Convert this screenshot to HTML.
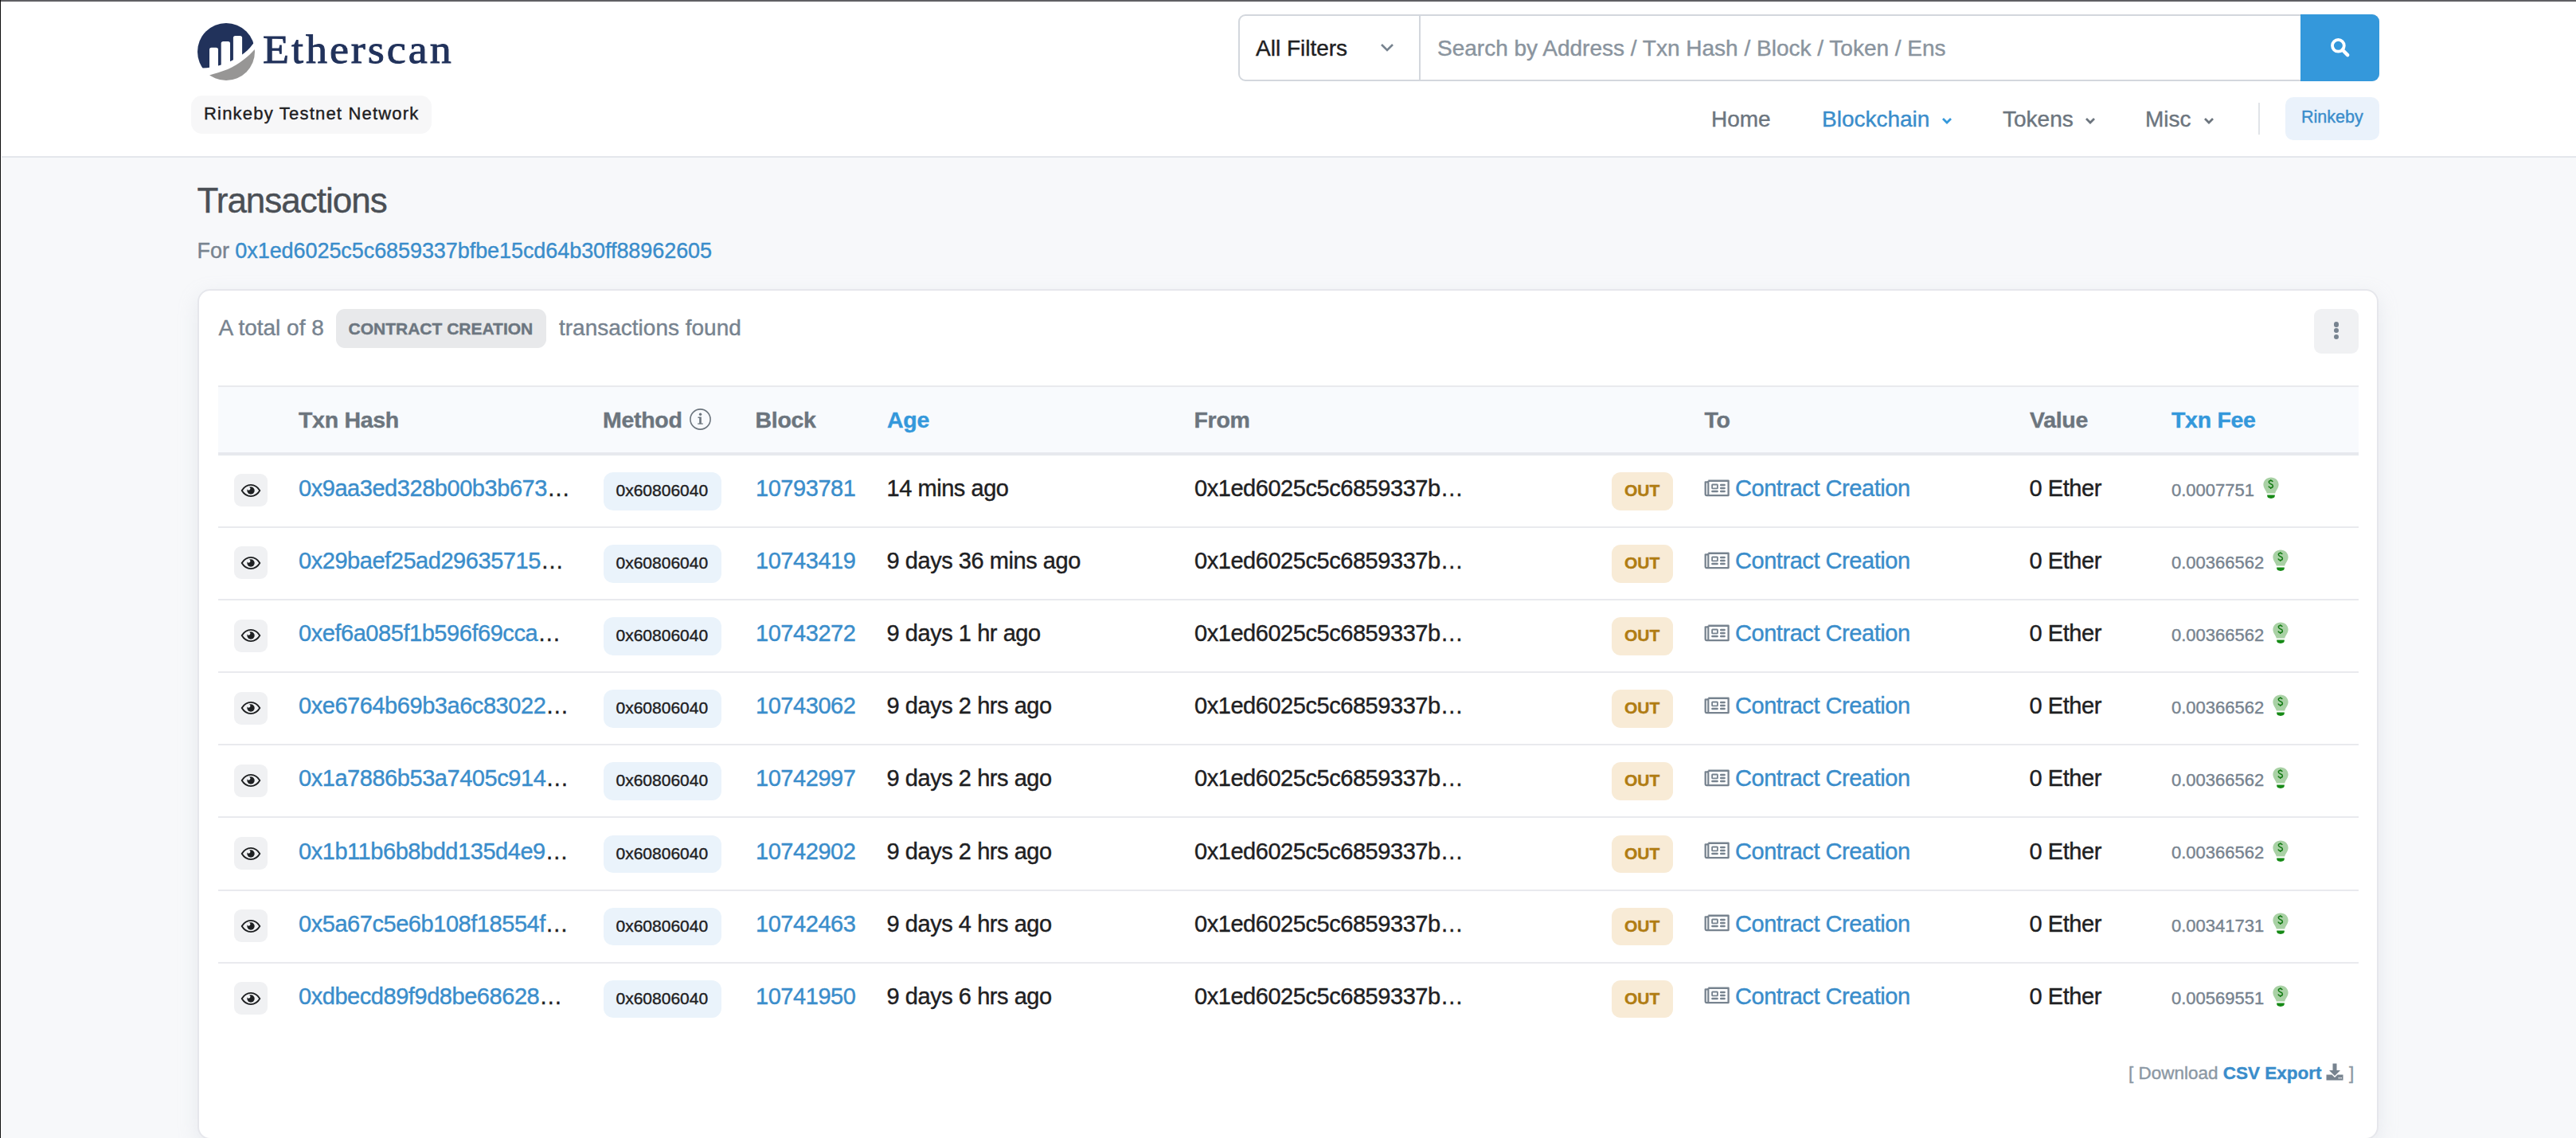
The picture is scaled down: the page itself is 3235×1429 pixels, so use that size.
<!DOCTYPE html><html><head><meta charset="utf-8"><style>
*{margin:0;padding:0;box-sizing:border-box}
html,body{width:3235px;height:1429px;overflow:hidden}
body{position:relative;background:#f7f8fa;font-family:"Liberation Sans", sans-serif;color:#1e2022}
.a{position:absolute}
.t{position:absolute;line-height:1;white-space:nowrap;-webkit-text-stroke-width:0.4px}
.blue{color:#3a8dcb}
.gray{color:#77838f}
.b{font-weight:700}
</style></head><body>
<div class="a" style="left:0;top:0;width:3235px;height:2px;background:#5f5f63;z-index:5"></div>
<div class="a" style="left:0;top:0;width:1px;height:1429px;background:#111;z-index:5"></div>
<div class="a" style="left:1px;top:2px;width:1px;height:1427px;background:#fdfdfd;z-index:5"></div>
<div class="a" style="left:0;top:0;width:3235px;height:198px;background:#fff;border-bottom:2px solid #e4e7ec"></div>
<svg class="a" style="left:244px;top:25px" width="80" height="80" viewBox="0 0 80 80">
<defs><clipPath id="cc"><circle cx="40" cy="40" r="36"/></clipPath></defs>
<g clip-path="url(#cc)">
<path d="M0 0H80V22L73 31C66 41 52 51 32 57C24 59.3 16 60.5 8 60.5L0 60Z" fill="#21325b"/>
<path d="M19 37.4Q19 34.8 21.6 34.8H27.4Q30 34.8 30 37.4V70H19Z" fill="#fff"/>
<path d="M33.7 29.6Q33.7 27 36.3 27H42.4Q45 27 45 29.6V70H33.7Z" fill="#fff"/>
<path d="M48.9 22.6Q48.9 20 51.5 20H57.5Q60.1 20 60.1 22.6V70H48.9Z" fill="#fff"/>
<path d="M82 30L75.6 37.3C68 46 56 56 42 62C33 65.5 26 67.5 19.7 69.2L0 82H82Z" fill="#979695"/>
</g>
</svg>
<div class="t" style="left:330px;top:37.474999999999994px;font-family:'Liberation Serif',serif;font-weight:400;font-size:50px;color:#21325b;letter-spacing:2.75px;transform:scaleX(1.08);transform-origin:0 0;-webkit-text-stroke:0.9px #21325b">Etherscan</div>
<div class="a" style="left:240px;top:120px;width:302px;height:48px;border-radius:14px;background:#f7f7f8"></div>
<div class="t" style="left:256px;top:132.17700000000002px;font-size:22px;letter-spacing:1.2px;color:#1e2022">Rinkeby Testnet Network</div>
<div class="a" style="left:1555px;top:18px;width:1433px;height:84px;border:2px solid #d3d7dd;border-radius:9px;background:#fff"></div>
<div class="a" style="left:1782px;top:18px;width:2px;height:84px;background:#d3d7dd"></div>
<div class="t" style="left:1577px;top:47.098px;font-size:28px;color:#1e2022">All Filters</div>
<svg class="a" style="left:1732px;top:52px" width="20" height="16" viewBox="0 0 20 16"><path d="M3 4L10 11L17 4" fill="none" stroke="#77838f" stroke-width="2.6"/></svg>
<div class="t" style="left:1805px;top:47.298px;font-size:28px;color:#8a949e">Search by Address / Txn Hash / Block / Token / Ens</div>
<div class="a" style="left:2889px;top:18px;width:99px;height:84px;background:#3498db;border-radius:0 9px 9px 0"></div>
<svg class="a" style="left:2924px;top:46px" width="28" height="28" viewBox="0 0 28 28"><circle cx="12.4" cy="11.3" r="7.4" fill="none" stroke="#fff" stroke-width="3.8"/><path d="M17.6 16.5L24.2 23.1" stroke="#fff" stroke-width="4.4" stroke-linecap="round"/></svg>
<div class="t" style="left:2149px;top:135.798px;font-size:28px;color:#6c757e">Home</div>
<div class="t blue" style="left:2288px;top:135.798px;font-size:28px">Blockchain</div>
<div class="t" style="left:2515px;top:135.798px;font-size:28px;color:#6c757e">Tokens</div>
<div class="t" style="left:2694px;top:135.798px;font-size:28px;color:#6c757e">Misc</div>
<svg class="a" style="left:2438px;top:146px" width="14" height="12" viewBox="0 0 14 12"><path d="M2 3L7 8L12 3" fill="none" stroke="#3498db" stroke-width="2.8"/></svg>
<svg class="a" style="left:2618px;top:146px" width="14" height="12" viewBox="0 0 14 12"><path d="M2 3L7 8L12 3" fill="none" stroke="#6c757e" stroke-width="2.8"/></svg>
<svg class="a" style="left:2767px;top:146px" width="14" height="12" viewBox="0 0 14 12"><path d="M2 3L7 8L12 3" fill="none" stroke="#6c757e" stroke-width="2.8"/></svg>
<div class="a" style="left:2836px;top:129px;width:2px;height:40px;background:#e1e4e8"></div>
<div class="a" style="left:2870px;top:122px;width:118px;height:54px;border-radius:10px;background:#eaf2fb"></div>
<div class="t blue" style="left:2890px;top:137.10025000000002px;font-size:21.5px">Rinkeby</div>
<div class="t" style="left:247.5px;top:229.65399999999997px;font-size:44px;letter-spacing:-1.0px;color:#4a4f55">Transactions</div>
<div class="t gray" style="left:247.6px;top:302.04449999999997px;font-size:27px;letter-spacing:-0.07px">For <span class="blue">0x1ed6025c5c6859337bfbe15cd64b30ff88962605</span></div>
<div class="a" style="left:248px;top:363px;width:2739px;height:1068px;background:#fff;border:2px solid #e6e7ec;border-radius:16px;box-shadow:0 8px 24px rgba(189,197,209,.25)"></div>
<div class="t gray" style="left:274.5px;top:397.898px;font-size:28px">A total of 8</div>
<div class="a" style="left:422px;top:388px;width:264px;height:49px;border-radius:11px;background:#e8e9eb"></div>
<div class="t b" style="left:437.5px;top:401.8235px;font-size:21px;color:#6c7680">CONTRACT CREATION</div>
<div class="t gray" style="left:702px;top:397.898px;font-size:28px">transactions found</div>
<div class="a" style="left:2906px;top:388px;width:56px;height:56px;border-radius:9px;background:#f0f1f3"></div>
<div class="a" style="left:2930.8px;top:404.3px;width:6.4px;height:6.4px;border-radius:50%;background:#77838f"></div>
<div class="a" style="left:2930.8px;top:412.1px;width:6.4px;height:6.4px;border-radius:50%;background:#77838f"></div>
<div class="a" style="left:2930.8px;top:419.8px;width:6.4px;height:6.4px;border-radius:50%;background:#77838f"></div>
<div class="a" style="left:274px;top:484px;width:2688px;height:88px;background:#f8fafd;border-top:2px solid #e9eaee;border-bottom:4px solid #e7e9ee"></div>
<div class="t b" style="left:375px;top:513.37475px;font-size:28.5px;letter-spacing:-0.3px;color:#6c757e">Txn Hash</div>
<div class="t b" style="left:757px;top:513.37475px;font-size:28.5px;letter-spacing:-0.3px;color:#6c757e">Method</div>
<svg class="a" style="left:865px;top:512px" width="29" height="29" viewBox="0 0 29 29"><circle cx="14.5" cy="14.5" r="12.6" fill="none" stroke="#6c757e" stroke-width="1.6"/><circle cx="14.6" cy="8.2" r="1.7" fill="#6c757e"/><path d="M11.5 11.6H15.8V19.4H17.8V20.8H11.2V19.4H13.2V13H11.5Z" fill="#6c757e"/></svg>
<div class="t b" style="left:948.5px;top:513.37475px;font-size:28.5px;letter-spacing:-0.3px;color:#6c757e">Block</div>
<div class="t b" style="left:1114px;top:513.37475px;font-size:28.5px;letter-spacing:-0.3px;color:#3498db">Age</div>
<div class="t b" style="left:1499.5px;top:513.37475px;font-size:28.5px;letter-spacing:-0.3px;color:#6c757e">From</div>
<div class="t b" style="left:2140.5px;top:513.37475px;font-size:28.5px;letter-spacing:-0.3px;color:#6c757e">To</div>
<div class="t b" style="left:2549px;top:513.37475px;font-size:28.5px;letter-spacing:-0.3px;color:#6c757e">Value</div>
<div class="t b" style="left:2727px;top:513.37475px;font-size:28.5px;letter-spacing:-0.3px;color:#3498db">Txn Fee</div>
<div class="a" style="left:274px;top:661.0px;width:2688px;height:2px;background:#e9eaee"></div>
<div class="a" style="left:294px;top:595.3px;width:42px;height:41px;border-radius:9px;background:#f0f1f3"></div>
<div class="a" style="left:302px;top:607.0px;width:26px;height:18px;line-height:0"><svg width="26" height="18" viewBox="0 0 26 18"><path d="M1.7 9C4.5 4.4 8.4 1.9 13 1.9C17.6 1.9 21.5 4.4 24.3 9C21.5 13.6 17.6 16.1 13 16.1C8.4 16.1 4.5 13.6 1.7 9Z" fill="none" stroke="#1e2022" stroke-width="1.9" stroke-linejoin="round"/><circle cx="13" cy="9" r="4.7" fill="#1e2022"/><circle cx="10.3" cy="6.6" r="2.1" fill="#f0f1f3"/></svg></div>
<div class="t blue" style="left:375px;top:599.0515px;font-size:29px;letter-spacing:-0.45px">0x9aa3ed328b00b3b673<span style="color:#1e2022">…</span></div>
<div class="a" style="left:758px;top:593.0px;width:148px;height:47.5px;border-radius:12px;background:#eaf3fb"></div>
<div class="t" style="left:773.5px;top:605.0235px;font-size:21px">0x60806040</div>
<div class="t blue" style="left:949px;top:599.0515px;font-size:29px;letter-spacing:-0.45px">10793781</div>
<div class="t" style="left:1113.5px;top:599.0515px;font-size:29px;letter-spacing:-0.45px">14 mins ago</div>
<div class="t" style="left:1500px;top:599.0515px;font-size:29px;letter-spacing:-0.45px">0x1ed6025c5c6859337b…</div>
<div class="a" style="left:2024px;top:593.0px;width:77px;height:47.5px;border-radius:11px;background:#f8ebd6"></div>
<div class="t b" style="left:2040px;top:605.0235px;font-size:21px;color:#b07c12">OUT</div>
<div class="a" style="left:2140px;top:601.5px;width:32px;height:22px;line-height:0"><svg width="32" height="22" viewBox="0 0 32 22"><path d="M5.3 1.74H30.6V20.1H3.2Q1.7 20.1 1.7 18.6V3.36H5.3" fill="none" stroke="#77838f" stroke-width="2.3" stroke-linejoin="round"/><path d="M5.3 1.74V20.1" stroke="#77838f" stroke-width="2.2"/><rect x="10.1" y="6.5" width="6.8" height="4.8" rx="0.6" fill="none" stroke="#77838f" stroke-width="1.8"/><path d="M21.2 7H25.6M21.2 11H25.6M21.2 15H25.6M10.4 15H16.6" stroke="#77838f" stroke-width="2.5" stroke-linecap="round"/></svg></div>
<div class="t blue" style="left:2179px;top:599.0515px;font-size:29px;letter-spacing:-0.45px">Contract Creation</div>
<div class="t" style="left:2548.5px;top:599.0515px;font-size:29px;letter-spacing:-0.45px">0 Ether</div>
<div class="t gray" style="left:2727px;top:604.977px;font-size:22px">0.0007751</div>
<div class="a" style="left:2841px;top:598.0px;width:22px;height:30px;line-height:0"><svg width="22" height="30" viewBox="0 0 22 30"><path d="M11 1.4C5.6 1.4 1.4 5.3 1.4 10.5C1.4 15 4.8 17.6 5.8 21.4H16.2C17.2 17.6 20.6 15 20.6 10.5C20.6 5.3 16.4 1.4 11 1.4Z" fill="#a9d1a5"/><path d="M6.2 23.4H15.8V24.6Q15.8 27.9 11 27.9Q6.2 27.9 6.2 24.6Z" fill="#168a16"/><path d="M13.2 7C12.8 6 11.9 5.6 10.7 5.6C9.2 5.6 8.3 6.4 8.3 7.6C8.3 10.2 13.4 9.2 13.4 12.2C13.4 13.5 12.3 14.4 10.7 14.4C9.3 14.4 8.3 13.7 7.9 12.6M10.7 4.2V5.6M10.7 14.4V15.9" fill="none" stroke="#127a12" stroke-width="1.5"/></svg></div>
<div class="a" style="left:274px;top:752.1px;width:2688px;height:2px;background:#e9eaee"></div>
<div class="a" style="left:294px;top:686.4px;width:42px;height:41px;border-radius:9px;background:#f0f1f3"></div>
<div class="a" style="left:302px;top:698.1px;width:26px;height:18px;line-height:0"><svg width="26" height="18" viewBox="0 0 26 18"><path d="M1.7 9C4.5 4.4 8.4 1.9 13 1.9C17.6 1.9 21.5 4.4 24.3 9C21.5 13.6 17.6 16.1 13 16.1C8.4 16.1 4.5 13.6 1.7 9Z" fill="none" stroke="#1e2022" stroke-width="1.9" stroke-linejoin="round"/><circle cx="13" cy="9" r="4.7" fill="#1e2022"/><circle cx="10.3" cy="6.6" r="2.1" fill="#f0f1f3"/></svg></div>
<div class="t blue" style="left:375px;top:690.1515px;font-size:29px;letter-spacing:-0.45px">0x29baef25ad29635715<span style="color:#1e2022">…</span></div>
<div class="a" style="left:758px;top:684.1px;width:148px;height:47.5px;border-radius:12px;background:#eaf3fb"></div>
<div class="t" style="left:773.5px;top:696.1235px;font-size:21px">0x60806040</div>
<div class="t blue" style="left:949px;top:690.1515px;font-size:29px;letter-spacing:-0.45px">10743419</div>
<div class="t" style="left:1113.5px;top:690.1515px;font-size:29px;letter-spacing:-0.45px">9 days 36 mins ago</div>
<div class="t" style="left:1500px;top:690.1515px;font-size:29px;letter-spacing:-0.45px">0x1ed6025c5c6859337b…</div>
<div class="a" style="left:2024px;top:684.1px;width:77px;height:47.5px;border-radius:11px;background:#f8ebd6"></div>
<div class="t b" style="left:2040px;top:696.1235px;font-size:21px;color:#b07c12">OUT</div>
<div class="a" style="left:2140px;top:692.6px;width:32px;height:22px;line-height:0"><svg width="32" height="22" viewBox="0 0 32 22"><path d="M5.3 1.74H30.6V20.1H3.2Q1.7 20.1 1.7 18.6V3.36H5.3" fill="none" stroke="#77838f" stroke-width="2.3" stroke-linejoin="round"/><path d="M5.3 1.74V20.1" stroke="#77838f" stroke-width="2.2"/><rect x="10.1" y="6.5" width="6.8" height="4.8" rx="0.6" fill="none" stroke="#77838f" stroke-width="1.8"/><path d="M21.2 7H25.6M21.2 11H25.6M21.2 15H25.6M10.4 15H16.6" stroke="#77838f" stroke-width="2.5" stroke-linecap="round"/></svg></div>
<div class="t blue" style="left:2179px;top:690.1515px;font-size:29px;letter-spacing:-0.45px">Contract Creation</div>
<div class="t" style="left:2548.5px;top:690.1515px;font-size:29px;letter-spacing:-0.45px">0 Ether</div>
<div class="t gray" style="left:2727px;top:696.077px;font-size:22px">0.00366562</div>
<div class="a" style="left:2853px;top:689.1px;width:22px;height:30px;line-height:0"><svg width="22" height="30" viewBox="0 0 22 30"><path d="M11 1.4C5.6 1.4 1.4 5.3 1.4 10.5C1.4 15 4.8 17.6 5.8 21.4H16.2C17.2 17.6 20.6 15 20.6 10.5C20.6 5.3 16.4 1.4 11 1.4Z" fill="#a9d1a5"/><path d="M6.2 23.4H15.8V24.6Q15.8 27.9 11 27.9Q6.2 27.9 6.2 24.6Z" fill="#168a16"/><path d="M13.2 7C12.8 6 11.9 5.6 10.7 5.6C9.2 5.6 8.3 6.4 8.3 7.6C8.3 10.2 13.4 9.2 13.4 12.2C13.4 13.5 12.3 14.4 10.7 14.4C9.3 14.4 8.3 13.7 7.9 12.6M10.7 4.2V5.6M10.7 14.4V15.9" fill="none" stroke="#127a12" stroke-width="1.5"/></svg></div>
<div class="a" style="left:274px;top:843.2px;width:2688px;height:2px;background:#e9eaee"></div>
<div class="a" style="left:294px;top:777.5px;width:42px;height:41px;border-radius:9px;background:#f0f1f3"></div>
<div class="a" style="left:302px;top:789.2px;width:26px;height:18px;line-height:0"><svg width="26" height="18" viewBox="0 0 26 18"><path d="M1.7 9C4.5 4.4 8.4 1.9 13 1.9C17.6 1.9 21.5 4.4 24.3 9C21.5 13.6 17.6 16.1 13 16.1C8.4 16.1 4.5 13.6 1.7 9Z" fill="none" stroke="#1e2022" stroke-width="1.9" stroke-linejoin="round"/><circle cx="13" cy="9" r="4.7" fill="#1e2022"/><circle cx="10.3" cy="6.6" r="2.1" fill="#f0f1f3"/></svg></div>
<div class="t blue" style="left:375px;top:781.2515000000001px;font-size:29px;letter-spacing:-0.45px">0xef6a085f1b596f69cca<span style="color:#1e2022">…</span></div>
<div class="a" style="left:758px;top:775.2px;width:148px;height:47.5px;border-radius:12px;background:#eaf3fb"></div>
<div class="t" style="left:773.5px;top:787.2235000000001px;font-size:21px">0x60806040</div>
<div class="t blue" style="left:949px;top:781.2515000000001px;font-size:29px;letter-spacing:-0.45px">10743272</div>
<div class="t" style="left:1113.5px;top:781.2515000000001px;font-size:29px;letter-spacing:-0.45px">9 days 1 hr ago</div>
<div class="t" style="left:1500px;top:781.2515000000001px;font-size:29px;letter-spacing:-0.45px">0x1ed6025c5c6859337b…</div>
<div class="a" style="left:2024px;top:775.2px;width:77px;height:47.5px;border-radius:11px;background:#f8ebd6"></div>
<div class="t b" style="left:2040px;top:787.2235000000001px;font-size:21px;color:#b07c12">OUT</div>
<div class="a" style="left:2140px;top:783.7px;width:32px;height:22px;line-height:0"><svg width="32" height="22" viewBox="0 0 32 22"><path d="M5.3 1.74H30.6V20.1H3.2Q1.7 20.1 1.7 18.6V3.36H5.3" fill="none" stroke="#77838f" stroke-width="2.3" stroke-linejoin="round"/><path d="M5.3 1.74V20.1" stroke="#77838f" stroke-width="2.2"/><rect x="10.1" y="6.5" width="6.8" height="4.8" rx="0.6" fill="none" stroke="#77838f" stroke-width="1.8"/><path d="M21.2 7H25.6M21.2 11H25.6M21.2 15H25.6M10.4 15H16.6" stroke="#77838f" stroke-width="2.5" stroke-linecap="round"/></svg></div>
<div class="t blue" style="left:2179px;top:781.2515000000001px;font-size:29px;letter-spacing:-0.45px">Contract Creation</div>
<div class="t" style="left:2548.5px;top:781.2515000000001px;font-size:29px;letter-spacing:-0.45px">0 Ether</div>
<div class="t gray" style="left:2727px;top:787.177px;font-size:22px">0.00366562</div>
<div class="a" style="left:2853px;top:780.2px;width:22px;height:30px;line-height:0"><svg width="22" height="30" viewBox="0 0 22 30"><path d="M11 1.4C5.6 1.4 1.4 5.3 1.4 10.5C1.4 15 4.8 17.6 5.8 21.4H16.2C17.2 17.6 20.6 15 20.6 10.5C20.6 5.3 16.4 1.4 11 1.4Z" fill="#a9d1a5"/><path d="M6.2 23.4H15.8V24.6Q15.8 27.9 11 27.9Q6.2 27.9 6.2 24.6Z" fill="#168a16"/><path d="M13.2 7C12.8 6 11.9 5.6 10.7 5.6C9.2 5.6 8.3 6.4 8.3 7.6C8.3 10.2 13.4 9.2 13.4 12.2C13.4 13.5 12.3 14.4 10.7 14.4C9.3 14.4 8.3 13.7 7.9 12.6M10.7 4.2V5.6M10.7 14.4V15.9" fill="none" stroke="#127a12" stroke-width="1.5"/></svg></div>
<div class="a" style="left:274px;top:934.3px;width:2688px;height:2px;background:#e9eaee"></div>
<div class="a" style="left:294px;top:868.5999999999999px;width:42px;height:41px;border-radius:9px;background:#f0f1f3"></div>
<div class="a" style="left:302px;top:880.3px;width:26px;height:18px;line-height:0"><svg width="26" height="18" viewBox="0 0 26 18"><path d="M1.7 9C4.5 4.4 8.4 1.9 13 1.9C17.6 1.9 21.5 4.4 24.3 9C21.5 13.6 17.6 16.1 13 16.1C8.4 16.1 4.5 13.6 1.7 9Z" fill="none" stroke="#1e2022" stroke-width="1.9" stroke-linejoin="round"/><circle cx="13" cy="9" r="4.7" fill="#1e2022"/><circle cx="10.3" cy="6.6" r="2.1" fill="#f0f1f3"/></svg></div>
<div class="t blue" style="left:375px;top:872.3515px;font-size:29px;letter-spacing:-0.45px">0xe6764b69b3a6c83022<span style="color:#1e2022">…</span></div>
<div class="a" style="left:758px;top:866.3px;width:148px;height:47.5px;border-radius:12px;background:#eaf3fb"></div>
<div class="t" style="left:773.5px;top:878.3235px;font-size:21px">0x60806040</div>
<div class="t blue" style="left:949px;top:872.3515px;font-size:29px;letter-spacing:-0.45px">10743062</div>
<div class="t" style="left:1113.5px;top:872.3515px;font-size:29px;letter-spacing:-0.45px">9 days 2 hrs ago</div>
<div class="t" style="left:1500px;top:872.3515px;font-size:29px;letter-spacing:-0.45px">0x1ed6025c5c6859337b…</div>
<div class="a" style="left:2024px;top:866.3px;width:77px;height:47.5px;border-radius:11px;background:#f8ebd6"></div>
<div class="t b" style="left:2040px;top:878.3235px;font-size:21px;color:#b07c12">OUT</div>
<div class="a" style="left:2140px;top:874.8px;width:32px;height:22px;line-height:0"><svg width="32" height="22" viewBox="0 0 32 22"><path d="M5.3 1.74H30.6V20.1H3.2Q1.7 20.1 1.7 18.6V3.36H5.3" fill="none" stroke="#77838f" stroke-width="2.3" stroke-linejoin="round"/><path d="M5.3 1.74V20.1" stroke="#77838f" stroke-width="2.2"/><rect x="10.1" y="6.5" width="6.8" height="4.8" rx="0.6" fill="none" stroke="#77838f" stroke-width="1.8"/><path d="M21.2 7H25.6M21.2 11H25.6M21.2 15H25.6M10.4 15H16.6" stroke="#77838f" stroke-width="2.5" stroke-linecap="round"/></svg></div>
<div class="t blue" style="left:2179px;top:872.3515px;font-size:29px;letter-spacing:-0.45px">Contract Creation</div>
<div class="t" style="left:2548.5px;top:872.3515px;font-size:29px;letter-spacing:-0.45px">0 Ether</div>
<div class="t gray" style="left:2727px;top:878.2769999999999px;font-size:22px">0.00366562</div>
<div class="a" style="left:2853px;top:871.3px;width:22px;height:30px;line-height:0"><svg width="22" height="30" viewBox="0 0 22 30"><path d="M11 1.4C5.6 1.4 1.4 5.3 1.4 10.5C1.4 15 4.8 17.6 5.8 21.4H16.2C17.2 17.6 20.6 15 20.6 10.5C20.6 5.3 16.4 1.4 11 1.4Z" fill="#a9d1a5"/><path d="M6.2 23.4H15.8V24.6Q15.8 27.9 11 27.9Q6.2 27.9 6.2 24.6Z" fill="#168a16"/><path d="M13.2 7C12.8 6 11.9 5.6 10.7 5.6C9.2 5.6 8.3 6.4 8.3 7.6C8.3 10.2 13.4 9.2 13.4 12.2C13.4 13.5 12.3 14.4 10.7 14.4C9.3 14.4 8.3 13.7 7.9 12.6M10.7 4.2V5.6M10.7 14.4V15.9" fill="none" stroke="#127a12" stroke-width="1.5"/></svg></div>
<div class="a" style="left:274px;top:1025.4px;width:2688px;height:2px;background:#e9eaee"></div>
<div class="a" style="left:294px;top:959.6999999999999px;width:42px;height:41px;border-radius:9px;background:#f0f1f3"></div>
<div class="a" style="left:302px;top:971.4px;width:26px;height:18px;line-height:0"><svg width="26" height="18" viewBox="0 0 26 18"><path d="M1.7 9C4.5 4.4 8.4 1.9 13 1.9C17.6 1.9 21.5 4.4 24.3 9C21.5 13.6 17.6 16.1 13 16.1C8.4 16.1 4.5 13.6 1.7 9Z" fill="none" stroke="#1e2022" stroke-width="1.9" stroke-linejoin="round"/><circle cx="13" cy="9" r="4.7" fill="#1e2022"/><circle cx="10.3" cy="6.6" r="2.1" fill="#f0f1f3"/></svg></div>
<div class="t blue" style="left:375px;top:963.4515px;font-size:29px;letter-spacing:-0.45px">0x1a7886b53a7405c914<span style="color:#1e2022">…</span></div>
<div class="a" style="left:758px;top:957.4px;width:148px;height:47.5px;border-radius:12px;background:#eaf3fb"></div>
<div class="t" style="left:773.5px;top:969.4235px;font-size:21px">0x60806040</div>
<div class="t blue" style="left:949px;top:963.4515px;font-size:29px;letter-spacing:-0.45px">10742997</div>
<div class="t" style="left:1113.5px;top:963.4515px;font-size:29px;letter-spacing:-0.45px">9 days 2 hrs ago</div>
<div class="t" style="left:1500px;top:963.4515px;font-size:29px;letter-spacing:-0.45px">0x1ed6025c5c6859337b…</div>
<div class="a" style="left:2024px;top:957.4px;width:77px;height:47.5px;border-radius:11px;background:#f8ebd6"></div>
<div class="t b" style="left:2040px;top:969.4235px;font-size:21px;color:#b07c12">OUT</div>
<div class="a" style="left:2140px;top:965.9px;width:32px;height:22px;line-height:0"><svg width="32" height="22" viewBox="0 0 32 22"><path d="M5.3 1.74H30.6V20.1H3.2Q1.7 20.1 1.7 18.6V3.36H5.3" fill="none" stroke="#77838f" stroke-width="2.3" stroke-linejoin="round"/><path d="M5.3 1.74V20.1" stroke="#77838f" stroke-width="2.2"/><rect x="10.1" y="6.5" width="6.8" height="4.8" rx="0.6" fill="none" stroke="#77838f" stroke-width="1.8"/><path d="M21.2 7H25.6M21.2 11H25.6M21.2 15H25.6M10.4 15H16.6" stroke="#77838f" stroke-width="2.5" stroke-linecap="round"/></svg></div>
<div class="t blue" style="left:2179px;top:963.4515px;font-size:29px;letter-spacing:-0.45px">Contract Creation</div>
<div class="t" style="left:2548.5px;top:963.4515px;font-size:29px;letter-spacing:-0.45px">0 Ether</div>
<div class="t gray" style="left:2727px;top:969.377px;font-size:22px">0.00366562</div>
<div class="a" style="left:2853px;top:962.4px;width:22px;height:30px;line-height:0"><svg width="22" height="30" viewBox="0 0 22 30"><path d="M11 1.4C5.6 1.4 1.4 5.3 1.4 10.5C1.4 15 4.8 17.6 5.8 21.4H16.2C17.2 17.6 20.6 15 20.6 10.5C20.6 5.3 16.4 1.4 11 1.4Z" fill="#a9d1a5"/><path d="M6.2 23.4H15.8V24.6Q15.8 27.9 11 27.9Q6.2 27.9 6.2 24.6Z" fill="#168a16"/><path d="M13.2 7C12.8 6 11.9 5.6 10.7 5.6C9.2 5.6 8.3 6.4 8.3 7.6C8.3 10.2 13.4 9.2 13.4 12.2C13.4 13.5 12.3 14.4 10.7 14.4C9.3 14.4 8.3 13.7 7.9 12.6M10.7 4.2V5.6M10.7 14.4V15.9" fill="none" stroke="#127a12" stroke-width="1.5"/></svg></div>
<div class="a" style="left:274px;top:1116.5px;width:2688px;height:2px;background:#e9eaee"></div>
<div class="a" style="left:294px;top:1050.8px;width:42px;height:41px;border-radius:9px;background:#f0f1f3"></div>
<div class="a" style="left:302px;top:1062.5px;width:26px;height:18px;line-height:0"><svg width="26" height="18" viewBox="0 0 26 18"><path d="M1.7 9C4.5 4.4 8.4 1.9 13 1.9C17.6 1.9 21.5 4.4 24.3 9C21.5 13.6 17.6 16.1 13 16.1C8.4 16.1 4.5 13.6 1.7 9Z" fill="none" stroke="#1e2022" stroke-width="1.9" stroke-linejoin="round"/><circle cx="13" cy="9" r="4.7" fill="#1e2022"/><circle cx="10.3" cy="6.6" r="2.1" fill="#f0f1f3"/></svg></div>
<div class="t blue" style="left:375px;top:1054.5514999999998px;font-size:29px;letter-spacing:-0.45px">0x1b11b6b8bdd135d4e9<span style="color:#1e2022">…</span></div>
<div class="a" style="left:758px;top:1048.5px;width:148px;height:47.5px;border-radius:12px;background:#eaf3fb"></div>
<div class="t" style="left:773.5px;top:1060.5235px;font-size:21px">0x60806040</div>
<div class="t blue" style="left:949px;top:1054.5514999999998px;font-size:29px;letter-spacing:-0.45px">10742902</div>
<div class="t" style="left:1113.5px;top:1054.5514999999998px;font-size:29px;letter-spacing:-0.45px">9 days 2 hrs ago</div>
<div class="t" style="left:1500px;top:1054.5514999999998px;font-size:29px;letter-spacing:-0.45px">0x1ed6025c5c6859337b…</div>
<div class="a" style="left:2024px;top:1048.5px;width:77px;height:47.5px;border-radius:11px;background:#f8ebd6"></div>
<div class="t b" style="left:2040px;top:1060.5235px;font-size:21px;color:#b07c12">OUT</div>
<div class="a" style="left:2140px;top:1057.0px;width:32px;height:22px;line-height:0"><svg width="32" height="22" viewBox="0 0 32 22"><path d="M5.3 1.74H30.6V20.1H3.2Q1.7 20.1 1.7 18.6V3.36H5.3" fill="none" stroke="#77838f" stroke-width="2.3" stroke-linejoin="round"/><path d="M5.3 1.74V20.1" stroke="#77838f" stroke-width="2.2"/><rect x="10.1" y="6.5" width="6.8" height="4.8" rx="0.6" fill="none" stroke="#77838f" stroke-width="1.8"/><path d="M21.2 7H25.6M21.2 11H25.6M21.2 15H25.6M10.4 15H16.6" stroke="#77838f" stroke-width="2.5" stroke-linecap="round"/></svg></div>
<div class="t blue" style="left:2179px;top:1054.5514999999998px;font-size:29px;letter-spacing:-0.45px">Contract Creation</div>
<div class="t" style="left:2548.5px;top:1054.5514999999998px;font-size:29px;letter-spacing:-0.45px">0 Ether</div>
<div class="t gray" style="left:2727px;top:1060.4769999999999px;font-size:22px">0.00366562</div>
<div class="a" style="left:2853px;top:1053.5px;width:22px;height:30px;line-height:0"><svg width="22" height="30" viewBox="0 0 22 30"><path d="M11 1.4C5.6 1.4 1.4 5.3 1.4 10.5C1.4 15 4.8 17.6 5.8 21.4H16.2C17.2 17.6 20.6 15 20.6 10.5C20.6 5.3 16.4 1.4 11 1.4Z" fill="#a9d1a5"/><path d="M6.2 23.4H15.8V24.6Q15.8 27.9 11 27.9Q6.2 27.9 6.2 24.6Z" fill="#168a16"/><path d="M13.2 7C12.8 6 11.9 5.6 10.7 5.6C9.2 5.6 8.3 6.4 8.3 7.6C8.3 10.2 13.4 9.2 13.4 12.2C13.4 13.5 12.3 14.4 10.7 14.4C9.3 14.4 8.3 13.7 7.9 12.6M10.7 4.2V5.6M10.7 14.4V15.9" fill="none" stroke="#127a12" stroke-width="1.5"/></svg></div>
<div class="a" style="left:274px;top:1207.6px;width:2688px;height:2px;background:#e9eaee"></div>
<div class="a" style="left:294px;top:1141.8999999999999px;width:42px;height:41px;border-radius:9px;background:#f0f1f3"></div>
<div class="a" style="left:302px;top:1153.6px;width:26px;height:18px;line-height:0"><svg width="26" height="18" viewBox="0 0 26 18"><path d="M1.7 9C4.5 4.4 8.4 1.9 13 1.9C17.6 1.9 21.5 4.4 24.3 9C21.5 13.6 17.6 16.1 13 16.1C8.4 16.1 4.5 13.6 1.7 9Z" fill="none" stroke="#1e2022" stroke-width="1.9" stroke-linejoin="round"/><circle cx="13" cy="9" r="4.7" fill="#1e2022"/><circle cx="10.3" cy="6.6" r="2.1" fill="#f0f1f3"/></svg></div>
<div class="t blue" style="left:375px;top:1145.6514999999997px;font-size:29px;letter-spacing:-0.45px">0x5a67c5e6b108f18554f<span style="color:#1e2022">…</span></div>
<div class="a" style="left:758px;top:1139.6px;width:148px;height:47.5px;border-radius:12px;background:#eaf3fb"></div>
<div class="t" style="left:773.5px;top:1151.6235px;font-size:21px">0x60806040</div>
<div class="t blue" style="left:949px;top:1145.6514999999997px;font-size:29px;letter-spacing:-0.45px">10742463</div>
<div class="t" style="left:1113.5px;top:1145.6514999999997px;font-size:29px;letter-spacing:-0.45px">9 days 4 hrs ago</div>
<div class="t" style="left:1500px;top:1145.6514999999997px;font-size:29px;letter-spacing:-0.45px">0x1ed6025c5c6859337b…</div>
<div class="a" style="left:2024px;top:1139.6px;width:77px;height:47.5px;border-radius:11px;background:#f8ebd6"></div>
<div class="t b" style="left:2040px;top:1151.6235px;font-size:21px;color:#b07c12">OUT</div>
<div class="a" style="left:2140px;top:1148.1px;width:32px;height:22px;line-height:0"><svg width="32" height="22" viewBox="0 0 32 22"><path d="M5.3 1.74H30.6V20.1H3.2Q1.7 20.1 1.7 18.6V3.36H5.3" fill="none" stroke="#77838f" stroke-width="2.3" stroke-linejoin="round"/><path d="M5.3 1.74V20.1" stroke="#77838f" stroke-width="2.2"/><rect x="10.1" y="6.5" width="6.8" height="4.8" rx="0.6" fill="none" stroke="#77838f" stroke-width="1.8"/><path d="M21.2 7H25.6M21.2 11H25.6M21.2 15H25.6M10.4 15H16.6" stroke="#77838f" stroke-width="2.5" stroke-linecap="round"/></svg></div>
<div class="t blue" style="left:2179px;top:1145.6514999999997px;font-size:29px;letter-spacing:-0.45px">Contract Creation</div>
<div class="t" style="left:2548.5px;top:1145.6514999999997px;font-size:29px;letter-spacing:-0.45px">0 Ether</div>
<div class="t gray" style="left:2727px;top:1151.5769999999998px;font-size:22px">0.00341731</div>
<div class="a" style="left:2853px;top:1144.6px;width:22px;height:30px;line-height:0"><svg width="22" height="30" viewBox="0 0 22 30"><path d="M11 1.4C5.6 1.4 1.4 5.3 1.4 10.5C1.4 15 4.8 17.6 5.8 21.4H16.2C17.2 17.6 20.6 15 20.6 10.5C20.6 5.3 16.4 1.4 11 1.4Z" fill="#a9d1a5"/><path d="M6.2 23.4H15.8V24.6Q15.8 27.9 11 27.9Q6.2 27.9 6.2 24.6Z" fill="#168a16"/><path d="M13.2 7C12.8 6 11.9 5.6 10.7 5.6C9.2 5.6 8.3 6.4 8.3 7.6C8.3 10.2 13.4 9.2 13.4 12.2C13.4 13.5 12.3 14.4 10.7 14.4C9.3 14.4 8.3 13.7 7.9 12.6M10.7 4.2V5.6M10.7 14.4V15.9" fill="none" stroke="#127a12" stroke-width="1.5"/></svg></div>
<div class="a" style="left:294px;top:1232.9999999999998px;width:42px;height:41px;border-radius:9px;background:#f0f1f3"></div>
<div class="a" style="left:302px;top:1244.6999999999998px;width:26px;height:18px;line-height:0"><svg width="26" height="18" viewBox="0 0 26 18"><path d="M1.7 9C4.5 4.4 8.4 1.9 13 1.9C17.6 1.9 21.5 4.4 24.3 9C21.5 13.6 17.6 16.1 13 16.1C8.4 16.1 4.5 13.6 1.7 9Z" fill="none" stroke="#1e2022" stroke-width="1.9" stroke-linejoin="round"/><circle cx="13" cy="9" r="4.7" fill="#1e2022"/><circle cx="10.3" cy="6.6" r="2.1" fill="#f0f1f3"/></svg></div>
<div class="t blue" style="left:375px;top:1236.7514999999996px;font-size:29px;letter-spacing:-0.45px">0xdbecd89f9d8be68628<span style="color:#1e2022">…</span></div>
<div class="a" style="left:758px;top:1230.6999999999998px;width:148px;height:47.5px;border-radius:12px;background:#eaf3fb"></div>
<div class="t" style="left:773.5px;top:1242.7234999999998px;font-size:21px">0x60806040</div>
<div class="t blue" style="left:949px;top:1236.7514999999996px;font-size:29px;letter-spacing:-0.45px">10741950</div>
<div class="t" style="left:1113.5px;top:1236.7514999999996px;font-size:29px;letter-spacing:-0.45px">9 days 6 hrs ago</div>
<div class="t" style="left:1500px;top:1236.7514999999996px;font-size:29px;letter-spacing:-0.45px">0x1ed6025c5c6859337b…</div>
<div class="a" style="left:2024px;top:1230.6999999999998px;width:77px;height:47.5px;border-radius:11px;background:#f8ebd6"></div>
<div class="t b" style="left:2040px;top:1242.7234999999998px;font-size:21px;color:#b07c12">OUT</div>
<div class="a" style="left:2140px;top:1239.1999999999998px;width:32px;height:22px;line-height:0"><svg width="32" height="22" viewBox="0 0 32 22"><path d="M5.3 1.74H30.6V20.1H3.2Q1.7 20.1 1.7 18.6V3.36H5.3" fill="none" stroke="#77838f" stroke-width="2.3" stroke-linejoin="round"/><path d="M5.3 1.74V20.1" stroke="#77838f" stroke-width="2.2"/><rect x="10.1" y="6.5" width="6.8" height="4.8" rx="0.6" fill="none" stroke="#77838f" stroke-width="1.8"/><path d="M21.2 7H25.6M21.2 11H25.6M21.2 15H25.6M10.4 15H16.6" stroke="#77838f" stroke-width="2.5" stroke-linecap="round"/></svg></div>
<div class="t blue" style="left:2179px;top:1236.7514999999996px;font-size:29px;letter-spacing:-0.45px">Contract Creation</div>
<div class="t" style="left:2548.5px;top:1236.7514999999996px;font-size:29px;letter-spacing:-0.45px">0 Ether</div>
<div class="t gray" style="left:2727px;top:1242.6769999999997px;font-size:22px">0.00569551</div>
<div class="a" style="left:2853px;top:1235.6999999999998px;width:22px;height:30px;line-height:0"><svg width="22" height="30" viewBox="0 0 22 30"><path d="M11 1.4C5.6 1.4 1.4 5.3 1.4 10.5C1.4 15 4.8 17.6 5.8 21.4H16.2C17.2 17.6 20.6 15 20.6 10.5C20.6 5.3 16.4 1.4 11 1.4Z" fill="#a9d1a5"/><path d="M6.2 23.4H15.8V24.6Q15.8 27.9 11 27.9Q6.2 27.9 6.2 24.6Z" fill="#168a16"/><path d="M13.2 7C12.8 6 11.9 5.6 10.7 5.6C9.2 5.6 8.3 6.4 8.3 7.6C8.3 10.2 13.4 9.2 13.4 12.2C13.4 13.5 12.3 14.4 10.7 14.4C9.3 14.4 8.3 13.7 7.9 12.6M10.7 4.2V5.6M10.7 14.4V15.9" fill="none" stroke="#127a12" stroke-width="1.5"/></svg></div>
<div class="t" style="left:2673px;top:1336.7537499999999px;font-size:22.5px;color:#8c98a4">[ Download <span class="b blue">CSV Export</span></div>
<div class="t" style="left:2950px;top:1336.7537499999999px;font-size:22.5px;color:#8c98a4">]</div>
<svg class="a" style="left:2920px;top:1334px" width="24" height="24" viewBox="0 0 24 24"><path d="M9.5 1.5H14.5V10H19L12 17L5 10H9.5Z" fill="#77838f"/><path d="M1.5 15.5H8.5L12 19L15.5 15.5H22.5V22.5H1.5Z" fill="#77838f"/><circle cx="17.5" cy="19.6" r="0.9" fill="#fff"/><circle cx="20" cy="19.6" r="0.9" fill="#fff"/></svg>
</body></html>
